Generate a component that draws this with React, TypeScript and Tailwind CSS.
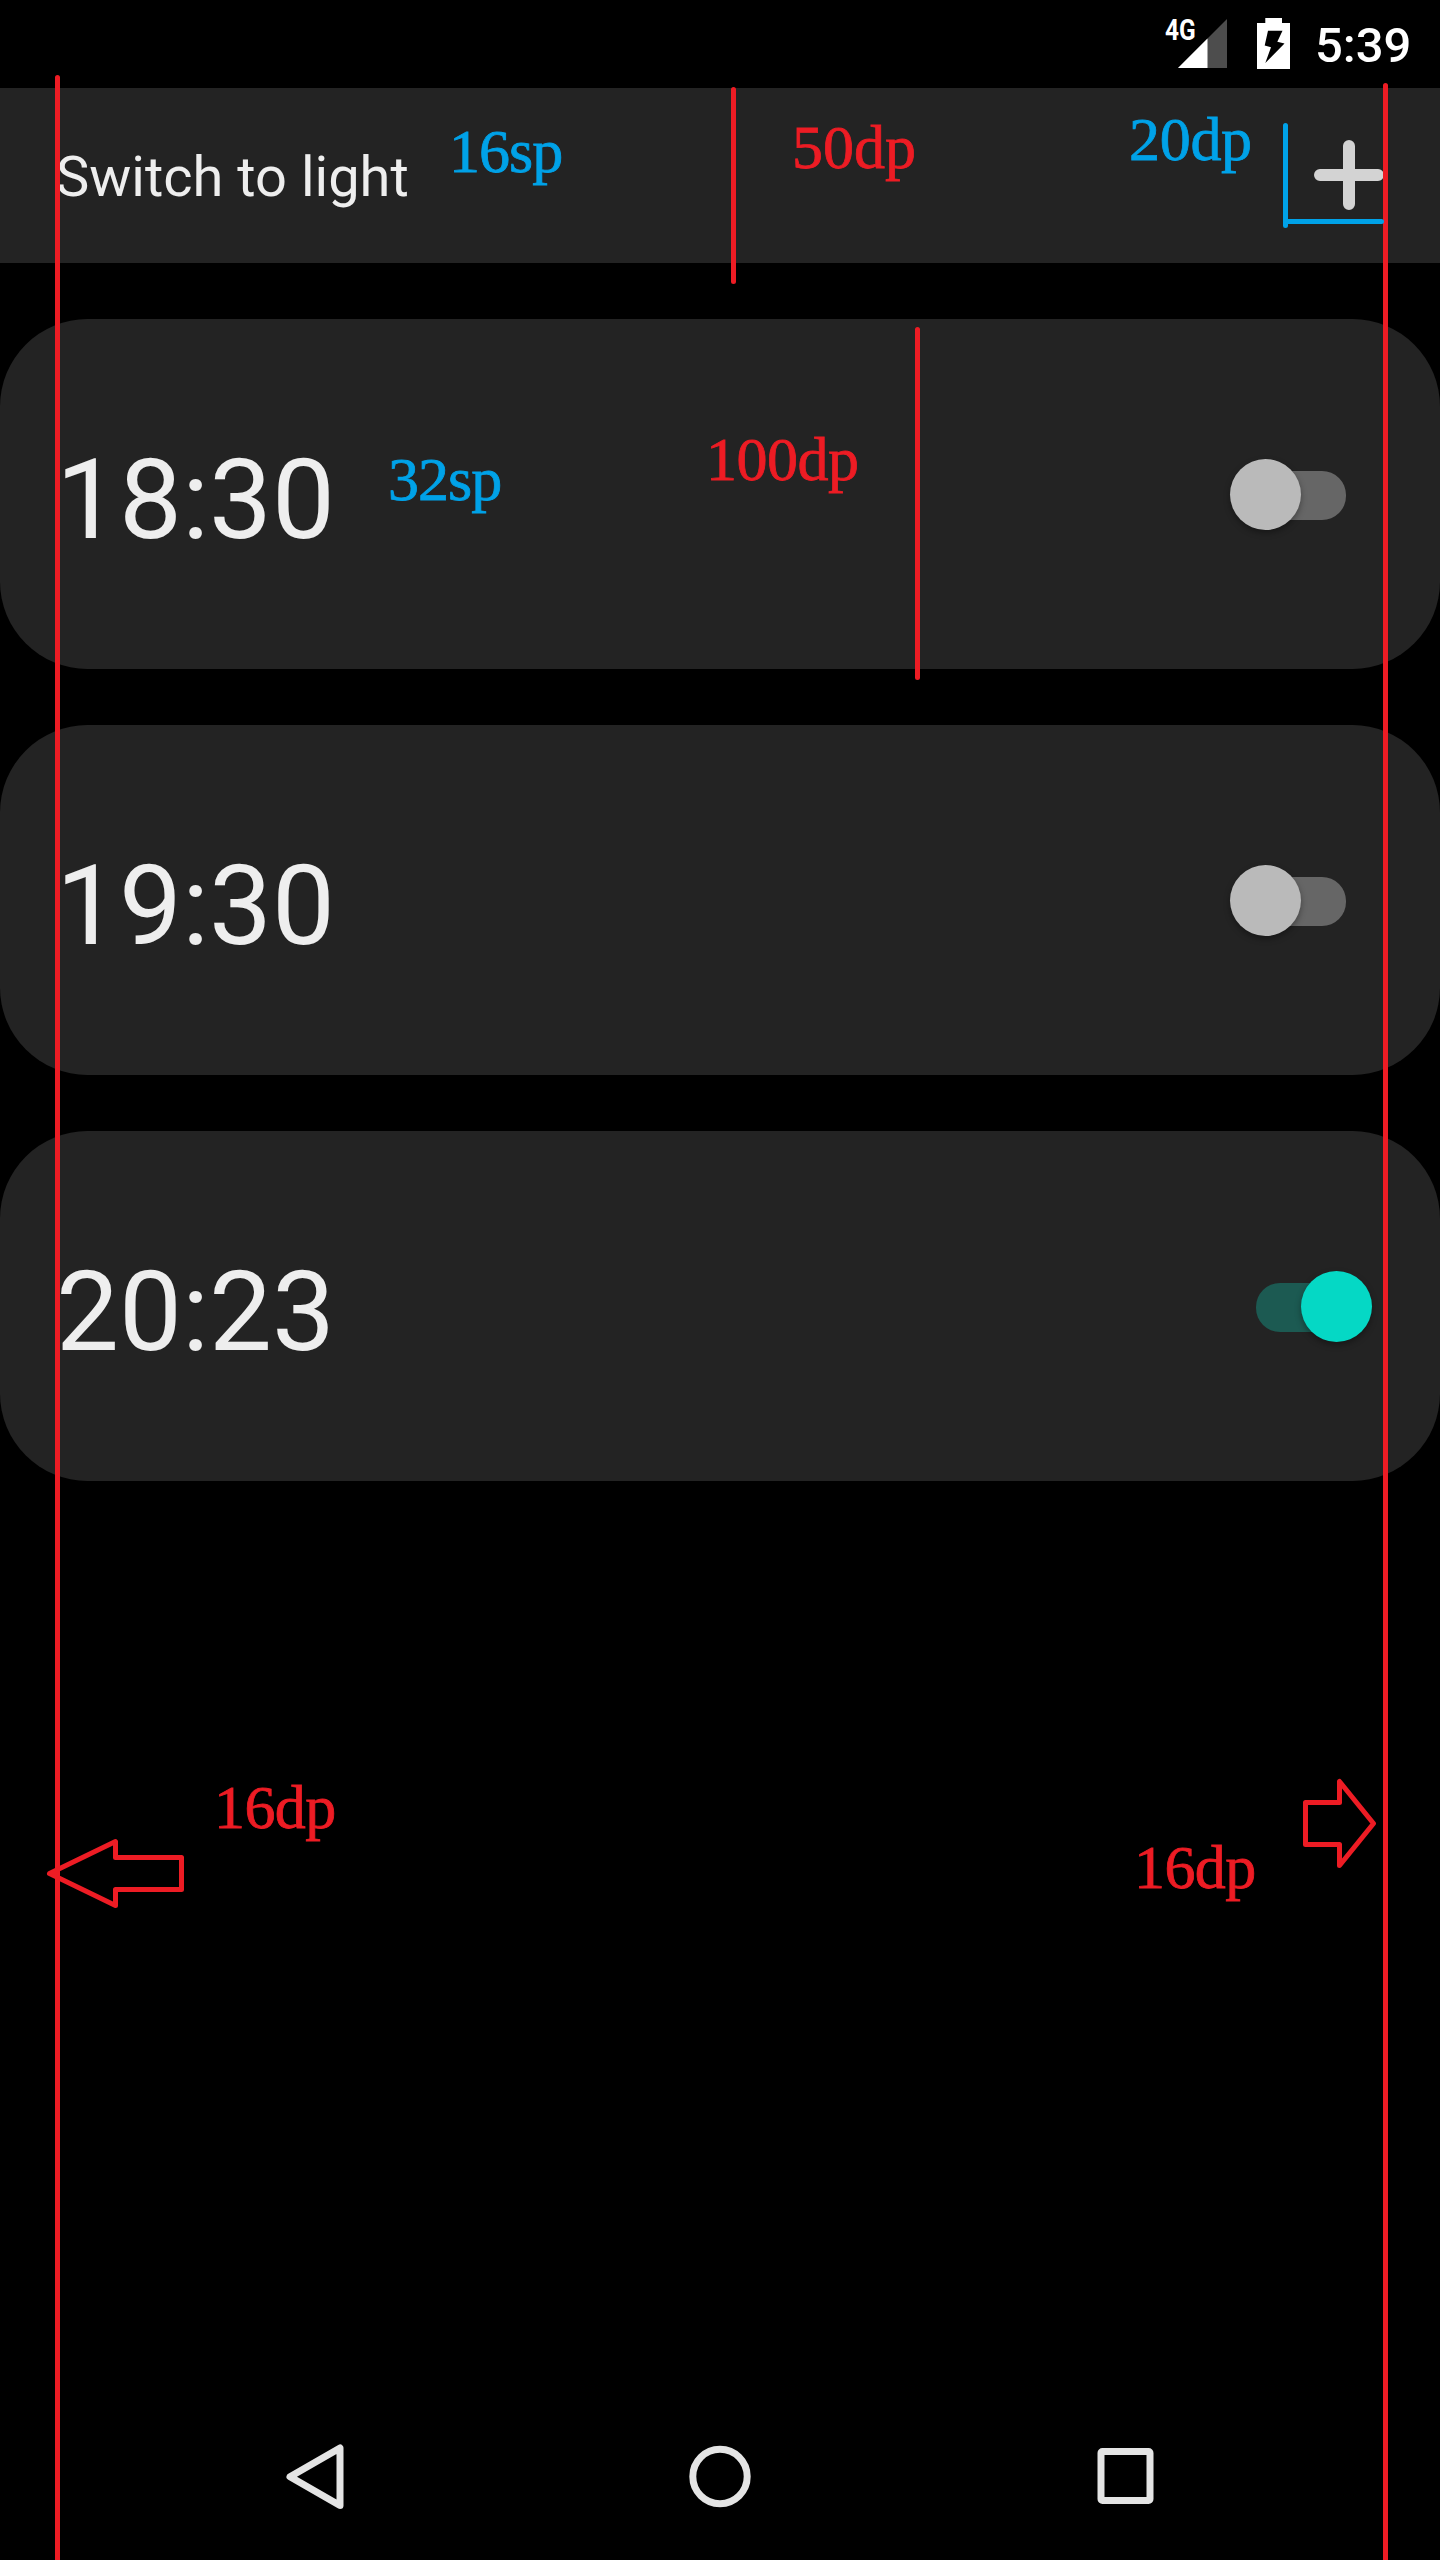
const alarms = [
  { time: "18:30", on: false },
  { time: "19:30", on: false },
  { time: "20:23", on: true },
];

function StatusBar() {
  return (
    <div className="flex h-[88px] justify-end bg-black pr-[29px] text-white">
      <span className="mt-[15px] mr-[2px] w-[34px] origin-left scale-x-[0.83] text-[29.5px] leading-[30px] font-bold">4G</span>
      <svg className="mt-[19px] -ml-[23px] h-[49px] w-[49px]" viewBox="0 0 49 49">
        <path d="M49 0V49H0Z" fill="#4d4d4d" />
        <path d="M29.5 19.5V49H0Z" fill="#fff" />
      </svg>
      <svg className="mt-[18px] ml-[30px] h-[51px] w-[33px]" viewBox="0 0 33 51">
        <path d="M8.3 0H25V5H33V51H0V5H8.3Z" fill="#fff" />
        <path d="M11 12.7H25.5L20.3 23.8L27.5 25.5L8.3 45L14 29.2L7.7 27.5Z" fill="#000" />
      </svg>
      <span className="mt-[17px] ml-[25px] w-[96px] text-[49px] leading-[58px] font-medium">5:39</span>
    </div>
  );
}

function Toggle({ on }: { on: boolean }) {
  return (
    <div className="relative mt-px h-[71px] w-[142px]">
      <div className={`absolute top-[12px] left-[26px] h-[49px] w-[90px] rounded-[24px] ${on ? "bg-[#1c5a52]" : "bg-[#666666]"}`} />
      <div
        className={`absolute top-0 h-[71px] w-[71px] rounded-full shadow-[0_3px_6px_rgba(0,0,0,0.35)] ${
          on ? "left-[71px] bg-[#05d8c5]" : "left-0 bg-[#bababa]"
        }`}
      />
    </div>
  );
}

const label =
  "absolute font-['Liberation_Serif',serif] text-[62px] leading-none whitespace-nowrap [-webkit-text-stroke:0.8px_currentColor]";

function Annotations() {
  return (
    <div className="pointer-events-none absolute inset-0">
      <svg className="absolute inset-0 h-[2560px] w-[1440px]" viewBox="0 0 1440 2560" fill="none" strokeWidth="5" strokeLinecap="round" strokeLinejoin="round">
        <g stroke="#ed1c24">
          <path d="M57.5 77.5V2565M1385.5 85.5V2565M733.5 89.5V281.5M917.5 329.5V677.5" />
          <path d="M49.5 1873.5L115.5 1841.5V1857.5H181.5V1889.5H115.5V1905.5Z" />
          <path d="M1373.5 1823.5L1339.5 1781.5V1802.5H1305.5V1844.5H1339.5V1865.5Z" />
        </g>
        <path d="M1285.5 125.5V225.5M1285.5 221.5H1381.5" stroke="#00a2e8" />
      </svg>
      <span className={`${label} top-[120px] left-[449px] tracking-[-1px] text-[#00a2e8]`}>16sp</span>
      <span className={`${label} top-[116px] left-[792px] text-[#ed1c24]`}>50dp</span>
      <span className={`${label} top-[108px] left-[1129px] tracking-[-0.3px] text-[#00a2e8]`}>20dp</span>
      <span className={`${label} top-[448px] left-[388px] tracking-[-1px] text-[#00a2e8]`}>32sp</span>
      <span className={`${label} top-[428px] left-[706px] tracking-[-0.5px] text-[#ed1c24]`}>100dp</span>
      <span className={`${label} top-[1776px] left-[214px] tracking-[-0.6px] text-[#ed1c24]`}>16dp</span>
      <span className={`${label} top-[1836px] left-[1134px] tracking-[-0.6px] text-[#ed1c24]`}>16dp</span>
    </div>
  );
}

export default function App() {
  return (
    <div className="relative flex h-[2560px] w-[1440px] flex-col overflow-hidden bg-black font-['Roboto',sans-serif]">
      <StatusBar />
      <header className="flex h-[175px] items-center justify-between bg-[#232323] pr-[56px] pb-px pl-[56px]">
        <h1 className="pt-[4px] text-[56px] leading-[66px] text-[#eeeeee]">Switch to light</h1>
        <svg className="h-[70px] w-[70px]" viewBox="0 0 70 70" stroke="#d3d3d3" strokeWidth="12" strokeLinecap="round">
          <path d="M35 6V64M6 35H64" />
        </svg>
      </header>
      <main className="flex flex-1 flex-col gap-[56px] pt-[56px]">
        {alarms.map((a) => (
          <div key={a.time} className="flex h-[350px] items-center justify-between rounded-[87.5px] bg-[#232323] pr-[68px] pl-[56px]">
            <span className="pt-[12px] text-[112px] leading-[132px] text-[#eeeeee]">{a.time}</span>
            <Toggle on={a.on} />
          </div>
        ))}
      </main>
      <nav className="flex h-[168px] items-center justify-between pt-[2px] pr-[282px] pl-[282px]">
        <svg className="h-[70px] w-[66px]" viewBox="0 0 66 70" fill="none" stroke="#e4e4e4" strokeWidth="7" strokeLinejoin="round">
          <path d="M58 6V63.5L8 34.7Z" />
        </svg>
        <svg className="h-[70px] w-[70px]" viewBox="0 0 70 70" fill="none" stroke="#e4e4e4" strokeWidth="7">
          <circle cx="35" cy="34.5" r="27.2" />
        </svg>
        <svg className="h-[70px] w-[66px]" viewBox="0 0 66 70" fill="none" stroke="#e4e4e4" strokeWidth="7">
          <rect x="9" y="9.5" width="49" height="49" rx="1.5" />
        </svg>
      </nav>
      <Annotations />
    </div>
  );
}
